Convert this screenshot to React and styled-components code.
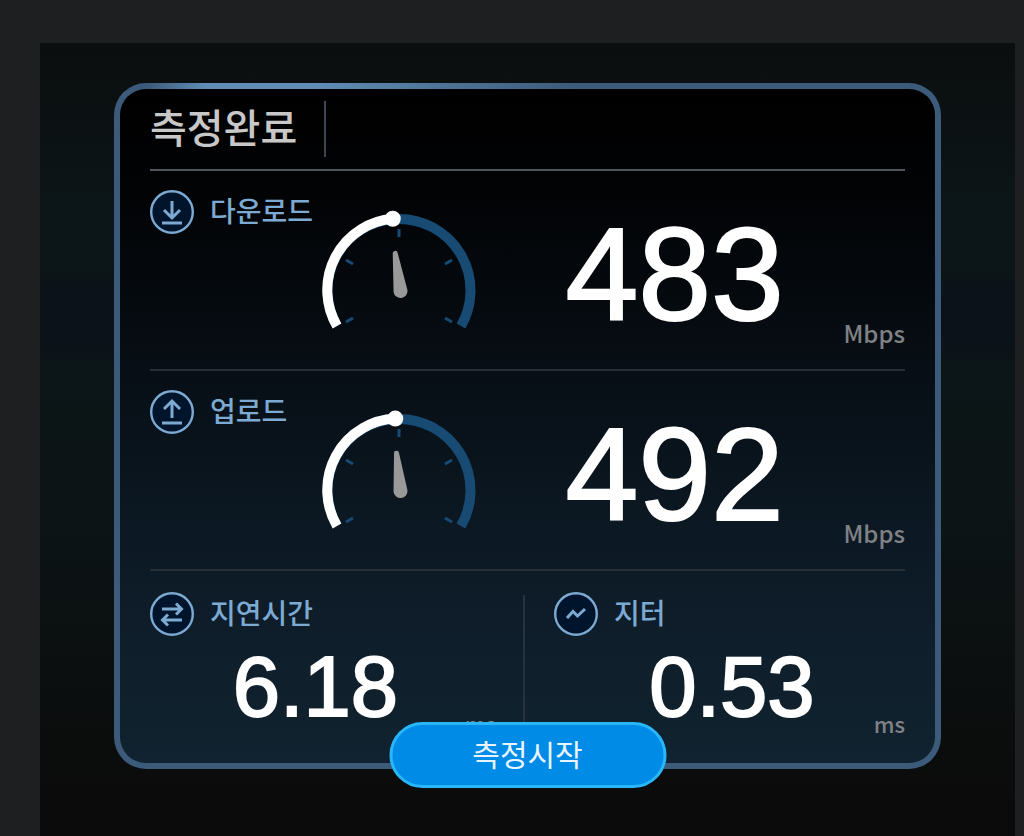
import styled, { createGlobalStyle } from 'styled-components'

const colors = {
  page: '#1e1f21',
  accent: '#7caad2',
  frame: '#3c5a7a',
  track: '#184b74',
  unit: '#7f8184',
}

const GlobalStyle = createGlobalStyle`
  * {
    box-sizing: border-box;
  }
  body {
    margin: 0;
    background: ${colors.page};
    font-family: 'Noto Sans CJK KR', sans-serif;
  }
`

const Page = styled.div`
  display: flex;
  min-height: 100vh;
  padding: 43px 9px 0 40px;
`

const Stage = styled.main`
  flex: 1;
  padding: 40px 74px 66px;
  background: linear-gradient(
    #0b0e0f,
    #0c1517 20%,
    #0c1517 28%,
    #0b121a 32%,
    #0b121a 37%,
    #0c1517 41%,
    #0c1415 60%,
    #0b0b0b 95%
  );
`

const Card = styled.section`
  position: relative;
  padding: 0 30px;
  border: 6px solid transparent;
  border-radius: 32px;
  background:
    linear-gradient(#000, #020305 15%, #0d1b27 72%, #112330) padding-box,
    linear-gradient(90deg, ${colors.frame} 4%, #5f8db5 11%, #5f8db5 24%, ${colors.frame} 56%) 0 0 /
      100% 6px no-repeat border-box,
    linear-gradient(${colors.frame}, ${colors.frame}) border-box;
`

const Header = styled.header`
  display: flex;
  align-items: flex-start;
  height: 82px;
  padding-top: 12px;
  border-bottom: 2px solid #4d565f;
`

const Title = styled.h1`
  margin: 0;
  padding: 0 27px 6px 0;
  border-right: 2px solid #3e474f;
  color: #c8c8c8;
  font-size: 40px;
  font-weight: 500;
  line-height: 50px;
`

const SpeedRow = styled.section`
  display: grid;
  grid-template-columns: 172px 154px 1fr auto;
  align-items: start;
  height: 200px;
  border-bottom: 2px solid #272f36;
`

const Label = styled.h2`
  display: flex;
  gap: 16px;
  height: 44px;
  margin: 19px 0 0;
  color: ${colors.accent};
  font-size: 28px;
  font-weight: 500;
  line-height: 40px;
  white-space: nowrap;
`

const GaugeSvg = styled.svg`
  display: block;
  margin-top: 41px;
  overflow: visible;
`

const Value = styled.strong`
  color: #fff;
  font-family: 'Liberation Sans', sans-serif;
  font-weight: 400;
  text-align: center;
  -webkit-text-stroke: 2px #fff;
`

const Speed = styled(Value)`
  padding: 38px 0 0 30px;
  font-size: 131px;
  line-height: 132px;
`

const Unit = styled.span`
  align-self: end;
  padding-bottom: 24px;
  color: ${colors.unit};
  font-size: 24px;
  font-weight: 500;
  line-height: 24px;
`

const MetricPair = styled.div`
  display: grid;
  grid-template-columns: 373fr 2px 380fr;
  height: 192px;
  padding-top: 2px;
`

const Metric = styled.section`
  padding: ${(props) => (props.$second ? '0 0 0 29px' : '0 27px 0 0')};
`

const Divider = styled.div`
  height: 140px;
  margin-top: 22px;
  background: #27333c;
`

const MetricBody = styled.div`
  display: grid;
  grid-template-columns: 1fr auto;
  padding-left: ${(props) => (props.$second ? '36px' : '16px')};
`

const MetricValue = styled(Value)`
  padding-top: 7px;
  font-size: 85px;
  line-height: 88px;
`

const MetricUnit = styled(Unit)`
  padding: 0;
  font-size: 22px;
  line-height: 16px;
`

const StartButton = styled.button`
  position: absolute;
  bottom: -25px;
  left: 50%;
  width: 277px;
  height: 66px;
  padding: 0 0 4px;
  border: 3px solid #29b6fb;
  border-radius: 33px;
  background: #008be6;
  color: #e8f4ff;
  font-family: inherit;
  font-size: 30px;
  line-height: 44px;
  transform: translateX(-50%);
  cursor: pointer;
`

const iconPaths = {
  download: 'M22 11v17M14 20l8 8 8-8M12 33h20',
  upload: 'M22 28V11M14 19l8-8 8 8M12 33h20',
  latency: 'M12 17h19M26 11.5l5.5 5.500-5.500 5.500M32 28H13M18 22.500L12.500 28l5.500 5.500',
  jitter: 'M13 26l6-6.5 4.500 4.500 7.500-7',
}

function Icon({ name }) {
  return (
    <svg width="44" height="44" viewBox="0 0 44 44" fill="none" aria-hidden="true">
      <circle cx="22" cy="22" r="20.8" fill="#00142b" stroke={colors.accent} strokeWidth="2.4" />
      <path d={iconPaths[name]} stroke={colors.accent} strokeWidth="3" />
    </svg>
  )
}

// 240 degree dial, angle is measured clockwise from straight up
function Gauge({ angle }) {
  const rad = (angle * Math.PI) / 180
  const x = 77 + 71.5 * Math.sin(rad)
  const y = 78 - 71.5 * Math.cos(rad)
  return (
    <GaugeSvg width="154" height="120" viewBox="0 0 154 120" fill="none" aria-hidden="true">
      <path d="M15 114A71.5 71.5 0 1 1 139 114" stroke={colors.track} strokeWidth="10" />
      <path
        d="M77 17v8M24 48l7 4M24 110l7-4M130 48l-7 4M130 110l-7-4"
        stroke={colors.track}
        strokeWidth="3"
      />
      <path d={`M15 114A71.5 71.5 0 0 1 ${x} ${y}`} stroke="#fff" strokeWidth="10" />
      <circle cx={x} cy={y} r="8" fill="#fff" />
      <path
        d="M-2.5-38a2.5 2.5 0 0 1 5 0L7 0A7 7 0 0 1-7 0z"
        fill="#999"
        transform={`translate(78.5 79) rotate(${angle - 3})`}
      />
    </GaugeSvg>
  )
}

function SpeedResult({ icon, label, value, angle }) {
  return (
    <SpeedRow>
      <Label>
        <Icon name={icon} />
        {label}
      </Label>
      <Gauge angle={angle} />
      <Speed>{value}</Speed>
      <Unit>Mbps</Unit>
    </SpeedRow>
  )
}

function MetricResult({ icon, label, value, second }) {
  return (
    <Metric $second={second}>
      <Label>
        <Icon name={icon} />
        {label}
      </Label>
      <MetricBody $second={second}>
        <MetricValue>{value}</MetricValue>
        <MetricUnit>ms</MetricUnit>
      </MetricBody>
    </Metric>
  )
}

function App() {
  return (
    <Page>
      <GlobalStyle />
      <Stage>
        <Card>
          <Header>
            <Title>측정완료</Title>
          </Header>
          <SpeedResult icon="download" label="다운로드" value="483" angle={-5} />
          <SpeedResult icon="upload" label="업로드" value="492" angle={-3} />
          <MetricPair>
            <MetricResult icon="latency" label="지연시간" value="6.18" />
            <Divider />
            <MetricResult icon="jitter" label="지터" value="0.53" second />
          </MetricPair>
          <StartButton type="button">측정시작</StartButton>
        </Card>
      </Stage>
    </Page>
  )
}

export default App
